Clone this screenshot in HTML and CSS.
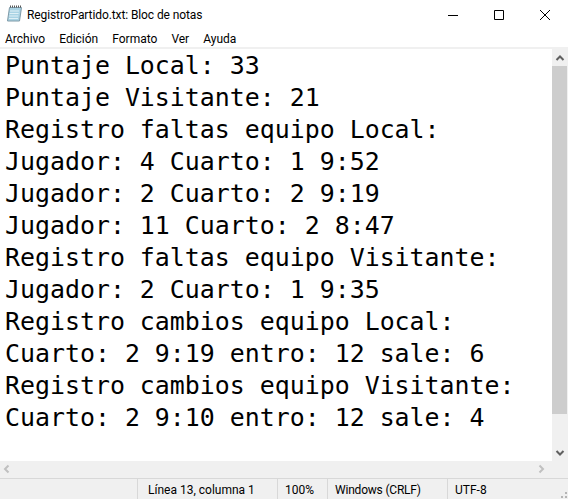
FILE: index.html
```html
<!DOCTYPE html>
<html lang="es">
<head>
<meta charset="utf-8">
<title>RegistroPartido.txt: Bloc de notas</title>
<link rel="stylesheet" href="styles.css">
</head>
<body>
<div class="window">
  <header class="titlebar">
    <svg class="app-icon" width="18" height="18" viewBox="0 0 18 18">
      <path d="M3.500 3.500h12l-2 13.500h-12z" fill="#a9d3e4" stroke="#7f9aa8"/>
      <path d="M4 7h9M3.600 9.500h9M3.300 12h9M3 14.500h9" stroke="#dff0f6" stroke-width="1"/>
      <path d="M4 2.500h11.500" stroke="#555" stroke-width="2" stroke-dasharray="1 1"/>
    </svg>
    <span class="title">RegistroPartido.txt: Bloc de notas</span>
    <div class="controls">
      <span class="control"><svg width="10" height="10" viewBox="0 0 10 10"><path d="M0 5.500h10" stroke="#000"/></svg></span>
      <span class="control"><svg width="10" height="10" viewBox="0 0 10 10"><path d="M.5.500h9v9h-9z" fill="none" stroke="#000"/></svg></span>
      <span class="control"><svg width="10" height="10" viewBox="0 0 10 10"><path d="M0 0l10 10M10 0L0 10" stroke="#000" fill="none"/></svg></span>
    </div>
  </header>
  <nav class="menu">
    <span>Archivo</span><span>Edición</span><span>Formato</span><span>Ver</span><span>Ayuda</span>
  </nav>
  <main class="body">
    <pre class="text">Puntaje Local: 33
Puntaje Visitante: 21
Registro faltas equipo Local:
Jugador: 4 Cuarto: 1 9:52
Jugador: 2 Cuarto: 2 9:19
Jugador: 11 Cuarto: 2 8:47
Registro faltas equipo Visitante:
Jugador: 2 Cuarto: 1 9:35
Registro cambios equipo Local:
Cuarto: 2 9:19 entro: 12 sale: 6
Registro cambios equipo Visitante:
Cuarto: 2 9:10 entro: 12 sale: 4</pre>
    <div class="vscroll">
      <svg class="arrow" width="16" height="17" viewBox="0 0 16 17"><path d="M4.500 11L8 7.500 11.500 11" fill="none" stroke="#606060" stroke-width="2"/></svg>
      <div class="thumb"></div>
      <svg class="arrow" width="16" height="17" viewBox="0 0 16 17"><path d="M4.500 7L8 10.500 11.500 7" fill="none" stroke="#606060" stroke-width="2"/></svg>
    </div>
  </main>
  <div class="hscroll">
    <svg width="16" height="16" viewBox="0 0 16 16"><path d="M8.500 4.500L5 8l3.500 3.500" fill="none" stroke="#c0c0c0" stroke-width="2"/></svg>
    <svg class="arrow-right" width="16" height="16" viewBox="0 0 16 16"><path d="M6.500 4.500L10 8l-3.500 3.500" fill="none" stroke="#c0c0c0" stroke-width="2"/></svg>
  </div>
  <footer class="status">
    <span class="cell cell-pos">Línea 13, columna 1</span>
    <span class="cell cell-zoom">100%</span>
    <span class="cell cell-eol">Windows (CRLF)</span>
    <span class="cell cell-enc">UTF-8</span>
    <svg class="grip" width="12" height="12" viewBox="0 0 12 12"><path d="M9 9h2v2H9zM5 9h2v2H5zM9 5h2v2H9z" fill="#b5b5b5"/></svg>
  </footer>
</div>
</body>
</html>
```

FILE: styles.css
```css
html, body { margin: 0; padding: 0; background: #fff; }
.window {
  width: 568px;
  height: 499px;
  display: flex;
  flex-direction: column;
  overflow: hidden;
  font-family: Roboto, "Open Sans", "Liberation Sans", sans-serif;
  color: #000;
}
.titlebar {
  height: 30px;
  display: flex;
  align-items: center;
  padding-left: 6px;
  flex: none;
}
.app-icon { margin: 0 3px 4px 0; flex: none; }
.title { font-size: 12px; letter-spacing: -0.1px; }
.controls { margin-left: auto; display: flex; }
.control {
  width: 46px;
  height: 30px;
  display: flex;
  align-items: center;
  justify-content: center;
}
.menu {
  height: 17px;
  box-sizing: border-box;
  padding: 1px 0 0 5px;
  display: flex;
  align-items: center;
  gap: 14px;
  font-size: 12px;
  flex: none;
}
.body {
  flex: 1;
  min-height: 0;
  display: flex;
  border-top: 2px solid #f0f0f0;
}
.text {
  flex: 1;
  margin: 0;
  padding: 1px 0 0 5px;
  font-family: "DejaVu Sans Mono", monospace;
  font-size: 24.9px;
  line-height: 32px;
  color: #000;
}
.vscroll {
  width: 16px;
  flex: none;
  background: #f0f0f0;
  display: flex;
  flex-direction: column;
}
.arrow { flex: none; }
.thumb { flex: 1; background: #cdcdcd; margin: 0 1px 30px 0; }
.hscroll {
  height: 17px;
  flex: none;
  display: flex;
  justify-content: space-between;
  background: #f0f0f0;
  border-bottom: 1px solid #d8d8d8;
}
.arrow-right { margin-right: 19px; }
.status {
  height: 20px;
  flex: none;
  display: flex;
  align-items: center;
  background: #f0f0f0;
  font-size: 12px;
  position: relative;
}
.cell {
  height: 100%;
  display: flex;
  align-items: center;
  box-sizing: border-box;
  border-left: 1px solid #d8d8d8;
  padding: 1px 0 0 10px;
}
.cell-pos { margin-left: 137px; width: 140px; }
.cell-zoom { width: 50px; padding-left: 7px; }
.cell-eol { width: 120px; padding-left: 7px; letter-spacing: -0.2px; }
.cell-enc { padding-left: 7px; }
.grip { position: absolute; right: 0; bottom: 0; }
```
